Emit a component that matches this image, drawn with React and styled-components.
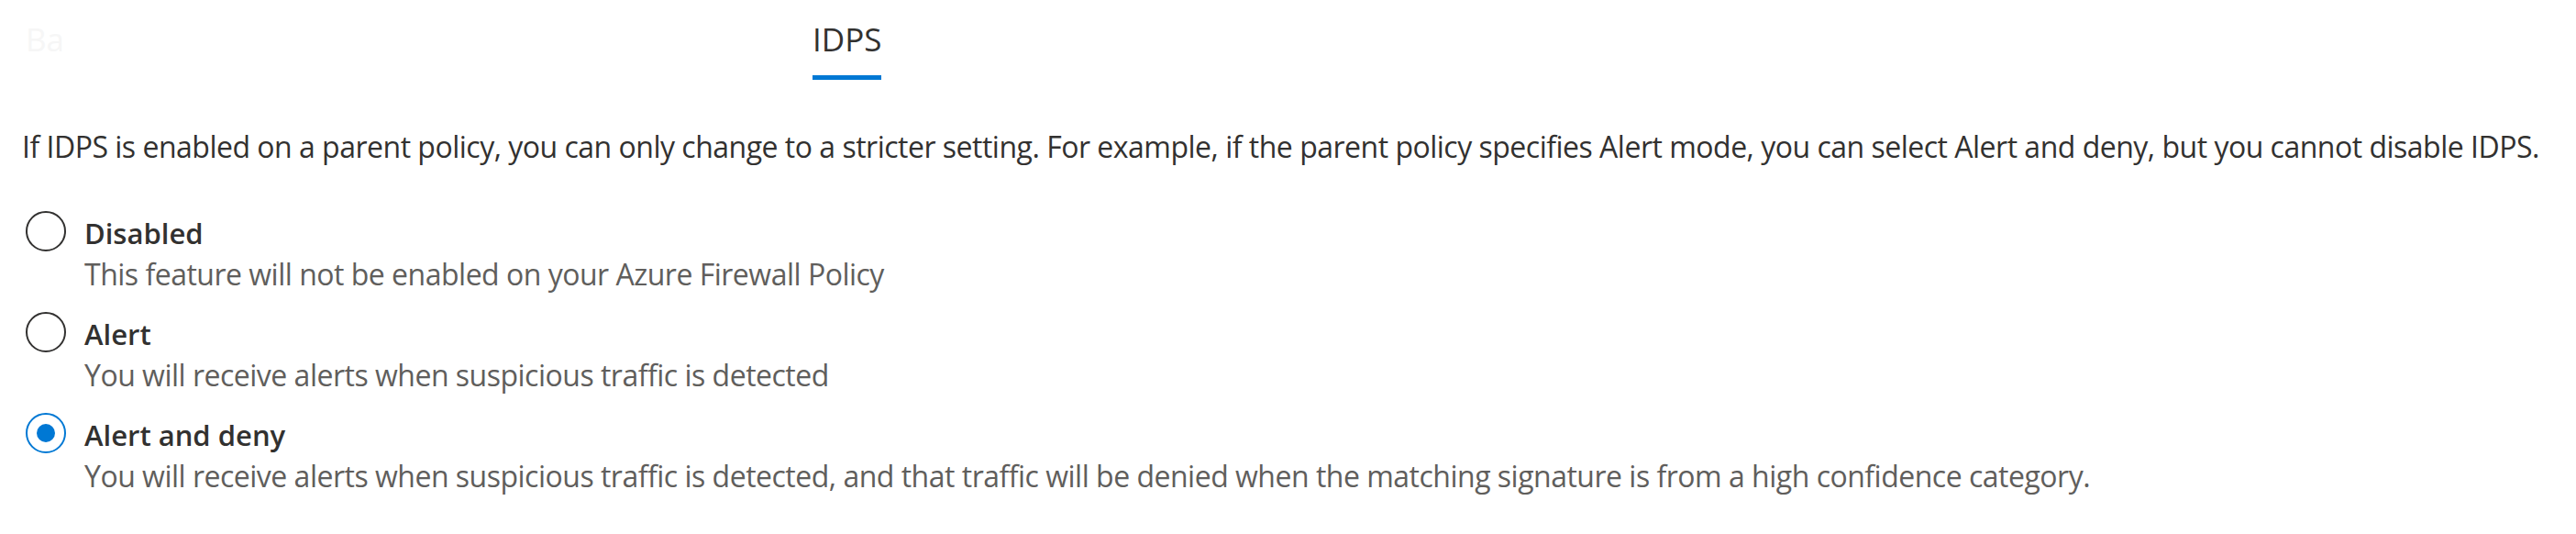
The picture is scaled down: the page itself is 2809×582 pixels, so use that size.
import React, { useState } from "react";
import styled, { createGlobalStyle } from "styled-components";

const GlobalStyle = createGlobalStyle`
  body {
    margin: 0;
    background: #ffffff;
    font-family: "Open Sans", "Noto Sans", sans-serif;
    color: #323130;
  }
`;

const Page = styled.div`
  padding: 0 24px;
`;

const TabStrip = styled.div`
  display: flex;
  align-items: flex-start;
  padding-left: 4px;
`;

const FadedTab = styled.div`
  width: 858px;
  padding-top: 19px;
  font-size: 35px;
  line-height: 48px;
  color: #f6f6f6;
`;

const Tab = styled.div`
  padding-top: 19px;
  font-size: 35px;
  line-height: 48px;
  color: #323130;
  display: flex;
  flex-direction: column;
  &::after {
    content: "";
    display: block;
    height: 5px;
    margin-top: 15px;
    background: ${(p) => (p.active ? "#0078d4" : "transparent")};
  }
`;

const Info = styled.p`
  margin: 50px 0 47px;
  font-size: 32px;
  letter-spacing: -0.5px;
  line-height: 46px;
  color: #323130;
  white-space: nowrap;
`;

const Options = styled.div`
  display: flex;
  flex-direction: column;
  gap: 20px;
  padding-left: 4px;
`;

const Option = styled.label`
  display: flex;
  align-items: flex-start;
  gap: 20px;
  cursor: pointer;
`;

const Circle = styled.span`
  flex: none;
  width: 44px;
  height: 44px;
  box-sizing: border-box;
  border-radius: 50%;
  border: 2px solid ${(p) => (p.checked ? "#0078d4" : "#323130")};
  display: flex;
  align-items: center;
  justify-content: center;
  &::after {
    content: "";
    width: 20px;
    height: 20px;
    border-radius: 50%;
    background: ${(p) => (p.checked ? "#0078d4" : "transparent")};
  }
`;

const Text = styled.div`
  display: flex;
  flex-direction: column;
`;

const Label = styled.span`
  font-size: 31px;
  line-height: 48px;
  font-weight: 600;
  color: #323130;
`;

const Desc = styled.span`
  font-size: 32px;
  letter-spacing: -0.5px;
  line-height: 42px;
  color: #605e5c;
  white-space: nowrap;
`;

const choices = [
  {
    id: "off",
    label: "Disabled",
    desc: "This feature will not be enabled on your Azure Firewall Policy",
  },
  {
    id: "alert",
    label: "Alert",
    desc: "You will receive alerts when suspicious traffic is detected",
  },
  {
    id: "deny",
    label: "Alert and deny",
    desc: "You will receive alerts when suspicious traffic is detected, and that traffic will be denied when the matching signature is from a high confidence category.",
  },
];

export default function App() {
  const [mode, setMode] = useState("deny");

  return (
    <Page>
      <GlobalStyle />
      <TabStrip>
        <FadedTab>Ba</FadedTab>
        <Tab active>IDPS</Tab>
      </TabStrip>
      <Info>
        If IDPS is enabled on a parent policy, you can only change to a stricter setting. For example, if the parent policy specifies Alert mode, you can select Alert and deny, but you cannot disable IDPS.
      </Info>
      <Options>
        {choices.map((c) => (
          <Option key={c.id} onClick={() => setMode(c.id)}>
            <Circle checked={mode === c.id} />
            <Text>
              <Label>{c.label}</Label>
              <Desc>{c.desc}</Desc>
            </Text>
          </Option>
        ))}
      </Options>
    </Page>
  );
}
